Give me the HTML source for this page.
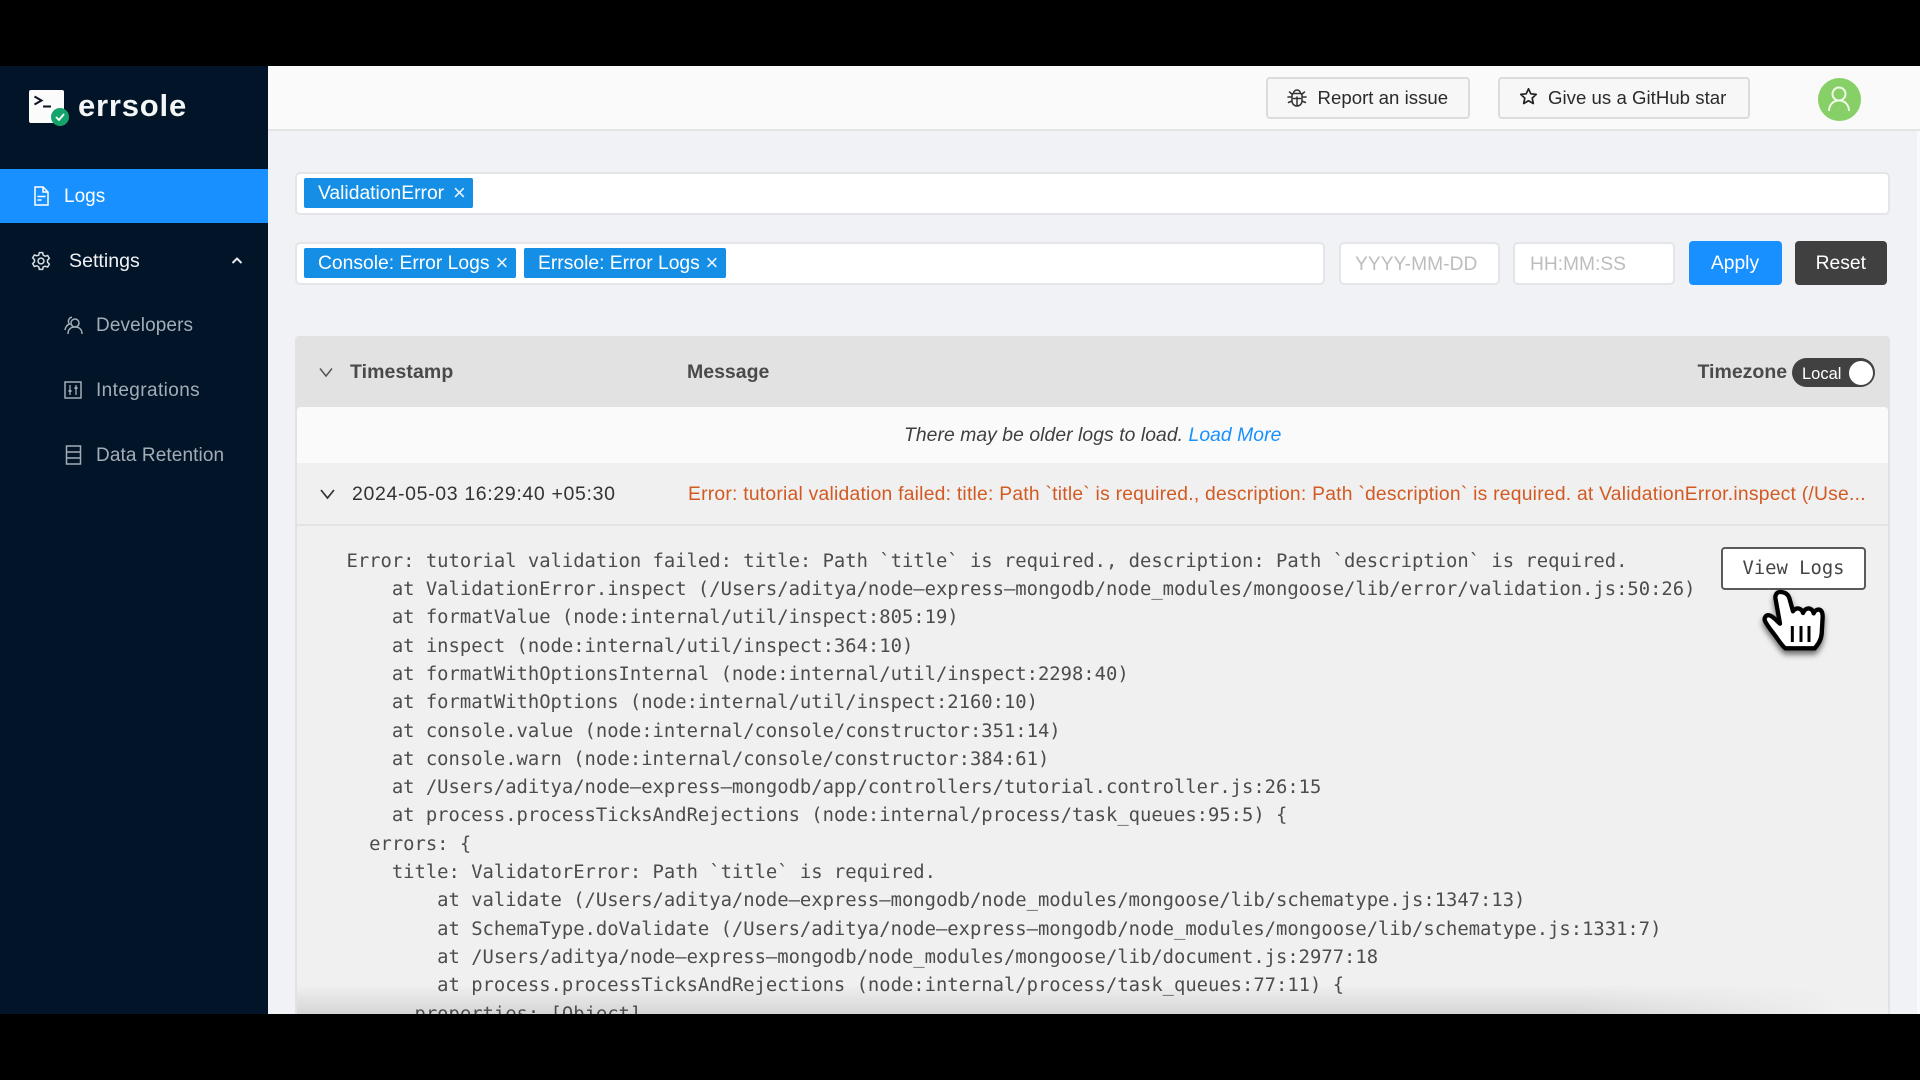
<!DOCTYPE html>
<html lang="en">
<head>
<meta charset="utf-8">
<title>errsole</title>
<style>
html,body{margin:0;padding:0;width:1920px;height:1080px;overflow:hidden;background:#000}
*{box-sizing:border-box}
body{font-family:"Liberation Sans",sans-serif;position:relative}
.a{position:absolute}
.t{position:absolute;white-space:nowrap;line-height:1}
#app{position:absolute;left:0;top:66px;width:1920px;height:948px;background:#f0f2f5;overflow:hidden}
#stage{position:absolute;left:0;top:-66px;width:1920px;height:1080px}
.box{position:absolute;background:#fff;border:2px solid #e3e5e8;border-radius:5px}
.tag{position:absolute;background:#158fe6;border-radius:2px;height:30px;color:#fff;font-size:19.3px;line-height:32px;white-space:nowrap;padding-left:14px}
.tag i{position:absolute;top:0;font-style:normal;font-size:22px;line-height:30px;color:#e8f4fd}
.hb{position:absolute;top:77px;height:42px;background:#f7f7f7;border:2px solid #dcdcdc;border-radius:4px}
.side{position:absolute;left:0;top:66px;width:268px;height:948px;background:#011428}
pre{margin:0;position:absolute;left:346.5px;top:547.8px;font-family:"DejaVu Sans Mono","Liberation Mono",monospace;font-size:18.84px;line-height:28.29px;color:#4c4c4c}
</style>
</head>
<body>
<div id="app"><div id="stage">

  <!-- topbar -->
  <div class="a" style="left:268px;top:66px;width:1652px;height:65px;background:#fafafa;border-bottom:2px solid #e4e4e4"></div>
  <div class="hb" style="left:1266px;width:204px"></div>
  <svg class="a" style="left:1287px;top:87px" width="20" height="21" viewBox="0 0 20 21" fill="none" stroke="#333" stroke-width="1.5" stroke-linecap="round"><path d="M6 6.5h8a2 2 0 0 1 1 1.7V14a5 5 0 0 1-10 0V8.2a2 2 0 0 1 1-1.7zM6.5 6.5a3.5 3.5 0 0 1 7 0M5 10H1M15 10h4M5 14l-3.5 1.5M15 14l3.5 1.5M5.5 7.5 2.5 5M14.5 7.5 17.5 5M10 10v8M6.5 11.5h7"/></svg>
  <div class="t" style="left:1317.5px;top:88.5px;font-size:18.6px;letter-spacing:.03px;color:#2a2a2a">Report an issue</div>
  <div class="hb" style="left:1497.5px;width:252.5px"></div>
  <svg class="a" style="left:1519px;top:87px" width="19" height="19" viewBox="0 0 19 19" fill="none" stroke="#222" stroke-width="1.7" stroke-linejoin="round"><path d="M9.5 1.8l2.3 5 5.4.6-4 3.7 1.1 5.4-4.8-2.7-4.8 2.7 1.1-5.4-4-3.7 5.4-.6z"/></svg>
  <div class="t" style="left:1548px;top:88.5px;font-size:18.6px;letter-spacing:.03px;color:#2a2a2a">Give us a GitHub star</div>
  <div class="a" style="left:1817.5px;top:78px;width:43px;height:43px;border-radius:50%;background:#87d068"></div>
  <svg class="a" style="left:1826px;top:85px" width="26" height="29" viewBox="0 0 26 29" fill="none" stroke="#f2fbe9" stroke-width="2"><circle cx="13" cy="9" r="6.5"/><path d="M3 26c0-6 4-10.5 10-10.5S23 20 23 26"/></svg>
  <div class="a" style="left:1917px;top:131px;width:3px;height:883px;background:#f9fafb"></div>

  <!-- filters -->
  <div class="box" style="left:295px;top:172px;width:1595px;height:43px"></div>
  <div class="tag" style="left:304px;top:178px;width:169px">ValidationError<i style="left:149px">×</i></div>
  <div class="box" style="left:295px;top:242px;width:1030px;height:43px"></div>
  <div class="tag" style="left:304px;top:248px;width:212px">Console: Error Logs<i style="left:191.500px">×</i></div>
  <div class="tag" style="left:524px;top:248px;width:202px">Errsole: Error Logs<i style="left:181.500px">×</i></div>
  <div class="box" style="left:1338.5px;top:242px;width:161px;height:43px"></div>
  <div class="t" style="left:1355px;top:254.5px;font-size:19.2px;letter-spacing:.05px;color:#bdbdbd">YYYY-MM-DD</div>
  <div class="box" style="left:1513px;top:242px;width:162px;height:43px"></div>
  <div class="t" style="left:1530px;top:254.5px;font-size:19.2px;color:#bdbdbd">HH:MM:SS</div>
  <div class="a" style="left:1688.5px;top:241px;width:93px;height:44px;background:#1890ff;border-radius:4px;color:#fff;font-size:19.3px;line-height:46px;text-align:center">Apply</div>
  <div class="a" style="left:1794.5px;top:241px;width:92.5px;height:44px;background:#404040;border-radius:4px;color:#fff;font-size:19.3px;line-height:46px;text-align:center">Reset</div>

  <!-- table -->
  <div class="a" style="left:295px;top:336px;width:1595px;height:678px;background:#e2e2e2;border-radius:4px 4px 0 0"></div>
  <div class="a" style="left:297px;top:407px;width:1591px;height:607px;background:#f0f0f0;border-radius:4px 4px 0 0"></div>
  <div class="a" style="left:297px;top:407px;width:1591px;height:56px;background:#fafafa;border-radius:4px 4px 0 0"></div>
  <div class="a" style="left:297px;top:524px;width:1591px;height:2px;background:#e3e3e3"></div>

  <svg class="a" style="left:319px;top:365px" width="14" height="14" viewBox="0 0 14 14" fill="none" stroke="#555" stroke-width="1.5"><path d="M1 3.5 7 11 13 3.5"/></svg>
  <div class="t" style="left:350px;top:362.5px;font-size:19.5px;font-weight:700;letter-spacing:.08px;color:#4a4a4a">Timestamp</div>
  <div class="t" style="left:687px;top:362.5px;font-size:19.5px;font-weight:700;color:#4a4a4a">Message</div>
  <div class="t" style="left:1697.5px;top:362.5px;font-size:19.5px;font-weight:700;color:#4a4a4a">Timezone</div>
  <div class="a" style="left:1792px;top:358px;width:83px;height:29px;border-radius:15px;background:#414141"></div>
  <div class="t" style="left:1802px;top:365.5px;font-size:16.5px;color:#fff">Local</div>
  <div class="a" style="left:1849px;top:361px;width:24px;height:24px;border-radius:50%;background:#fff"></div>

  <div class="t" style="left:904px;top:426px;font-size:19.3px;letter-spacing:.08px;font-style:italic;color:#3f3f3f">There may be older logs to load. <span style="color:#1890ff">Load More</span></div>

  <svg class="a" style="left:320px;top:487px" width="15" height="14" viewBox="0 0 15 14" fill="none" stroke="#333" stroke-width="1.7"><path d="M1 3 7.5 11 14 3"/></svg>
  <div class="t" style="left:352px;top:485px;font-size:19.5px;letter-spacing:.65px;color:#333">2024-05-03 16:29:40 +05:30</div>
  <div class="t" style="left:688px;top:485px;font-size:19.3px;letter-spacing:.24px;color:#d25a22">Error: tutorial validation failed: title: Path `title` is required., description: Path `description` is required. at ValidationError.inspect (/Use...</div>

  <!-- video vignette at bottom -->
  <div class="a" style="left:297px;top:985px;width:1591px;height:29px;background:linear-gradient(to bottom,rgba(200,200,200,0),rgba(196,196,196,.6));-webkit-mask-image:linear-gradient(to right,#000 80%,transparent 97%);mask-image:linear-gradient(to right,#000 80%,transparent 97%)"></div>

  <pre>Error: tutorial validation failed: title: Path `title` is required., description: Path `description` is required.
    at ValidationError.inspect (/Users/aditya/node–express–mongodb/node_modules/mongoose/lib/error/validation.js:50:26)
    at formatValue (node:internal/util/inspect:805:19)
    at inspect (node:internal/util/inspect:364:10)
    at formatWithOptionsInternal (node:internal/util/inspect:2298:40)
    at formatWithOptions (node:internal/util/inspect:2160:10)
    at console.value (node:internal/console/constructor:351:14)
    at console.warn (node:internal/console/constructor:384:61)
    at /Users/aditya/node–express–mongodb/app/controllers/tutorial.controller.js:26:15
    at process.processTicksAndRejections (node:internal/process/task_queues:95:5) {
  errors: {
    title: ValidatorError: Path `title` is required.
        at validate (/Users/aditya/node–express–mongodb/node_modules/mongoose/lib/schematype.js:1347:13)
        at SchemaType.doValidate (/Users/aditya/node–express–mongodb/node_modules/mongoose/lib/schematype.js:1331:7)
        at /Users/aditya/node–express–mongodb/node_modules/mongoose/lib/document.js:2977:18
        at process.processTicksAndRejections (node:internal/process/task_queues:77:11) {
      properties: [Object]</pre>

  <div class="a" style="left:1721px;top:547px;width:145px;height:43px;background:#fff;border:2px solid #5a5a5a;border-radius:4px;font-family:'DejaVu Sans Mono','Liberation Mono',monospace;font-size:18.84px;line-height:39px;text-align:center;color:#444">View Logs</div>

  <!-- hand cursor -->
  <svg class="a" style="left:1740px;top:570px;filter:drop-shadow(0 4px 3px rgba(0,0,0,.55))" width="110" height="100" viewBox="0 0 330 300">
    <path d="M120 66c-11 0-16 11-13 23l13 72c-10-8-20-22-32-25-10-2-17 7-13 17 8 17 24 34 35 50 9 13 16 24 26 32h88c10-12 19-24 21-43l3-52c0-18-8-24-18-20-5 2-8 6-9 10-3-14-15-18-24-12-5 3-7 8-8 11-4-14-17-17-26-10l-4 5-10-36c-3-13-11-22-29-22z" fill="#fff" stroke="#000" stroke-width="13" stroke-linejoin="round"/>
    <path d="M157 168v48M183 168v48M207 168v48" stroke="#000" stroke-width="9" fill="none"/>
  </svg>

</div></div>

<!-- sidebar -->
<div class="side">
  <div class="a" style="left:0;top:103px;width:268px;height:54px;background:#1890ff"></div>
</div>

<!-- logo -->
<div class="a" style="left:29px;top:90px;width:35px;height:33px;background:#fbfbfb;border-radius:2px"></div>
<svg class="a" style="left:33px;top:95px" width="20" height="14" viewBox="0 0 20 14" fill="none" stroke="#0c1220" stroke-width="2"><path d="M1.5 1.5 8.500 5.500 1.500 9.500M10 11.500h8"/></svg>
<div class="a" style="left:51px;top:108px;width:18px;height:18px;border-radius:50%;background:#14a36a"></div>
<svg class="a" style="left:55px;top:113px" width="10" height="8" viewBox="0 0 10 8" fill="none" stroke="#fff" stroke-width="1.8"><path d="M1 4l3 3 5-6"/></svg>
<div class="t" style="left:78px;top:90px;font-size:31px;font-weight:700;letter-spacing:.8px;color:#f4f5f6">errsole</div>

<!-- nav -->
<svg class="a" style="left:33px;top:186px" width="16" height="20" viewBox="0 0 16 20" fill="none" stroke="#fff" stroke-width="1.5"><path d="M2 1h8l5 5v13H2zM10 1v5h5M4.500 10.500h8M4.500 14h4"/></svg>
<div class="t" style="left:64px;top:186.5px;font-size:19px;color:#fff">Logs</div>

<svg class="a" style="left:31px;top:250px" width="20" height="22" viewBox="0 0 24 24" fill="none" stroke="#d8dde2" stroke-width="1.8"><circle cx="12" cy="12" r="3.5"/><path d="M10 2h4l.7 3 2.300 1.300 3-.9 2 3.400-2.200 2.200v2.600l2.200 2.200-2 3.400-3-.9L14.700 19 14 22h-4l-.7-3L7 17.700l-3 .9-2-3.400 2.200-2.200v-2.600L2 8.200l2-3.400 3 .9L9.300 5z"/></svg>
<div class="t" style="left:69px;top:251.5px;font-size:19.6px;color:#f0f2f4">Settings</div>
<svg class="a" style="left:231px;top:256px" width="12" height="9" viewBox="0 0 12 9" fill="none" stroke="#e6e9ec" stroke-width="2"><path d="M1.500 7 6 2.500 10.500 7"/></svg>

<svg class="a" style="left:64px;top:315px" width="19" height="20" viewBox="0 0 19 20" fill="none" stroke="#a4adb6" stroke-width="1.5"><circle cx="11" cy="8" r="4"/><path d="M4 19c0-5 3-7 7-7s7 2 7 7M8 2.300A4 4 0 0 0 5.500 9C3 10 1.500 12 1 15"/></svg>
<div class="t" style="left:96px;top:316px;font-size:19px;letter-spacing:.1px;color:#a4adb6">Developers</div>

<svg class="a" style="left:64px;top:381px" width="18" height="18" viewBox="0 0 18 18" fill="none" stroke="#a4adb6" stroke-width="1.5"><rect x="1" y="1" width="16" height="16"/><path d="M6 4v10M12 4v10" stroke-width="1.3"/><path d="M4.500 10h3M10.500 7h3" stroke-width="2"/></svg>
<div class="t" style="left:96px;top:380.5px;font-size:19px;letter-spacing:.4px;color:#a4adb6">Integrations</div>

<svg class="a" style="left:65px;top:445px" width="17" height="20" viewBox="0 0 17 20" fill="none" stroke="#a4adb6" stroke-width="1.5"><rect x="1.500" y="1" width="14" height="18"/><path d="M1.500 7h14M1.500 13h14"/></svg>
<div class="t" style="left:96px;top:445.5px;font-size:19px;letter-spacing:.1px;color:#a4adb6">Data Retention</div>
</body>
</html>
